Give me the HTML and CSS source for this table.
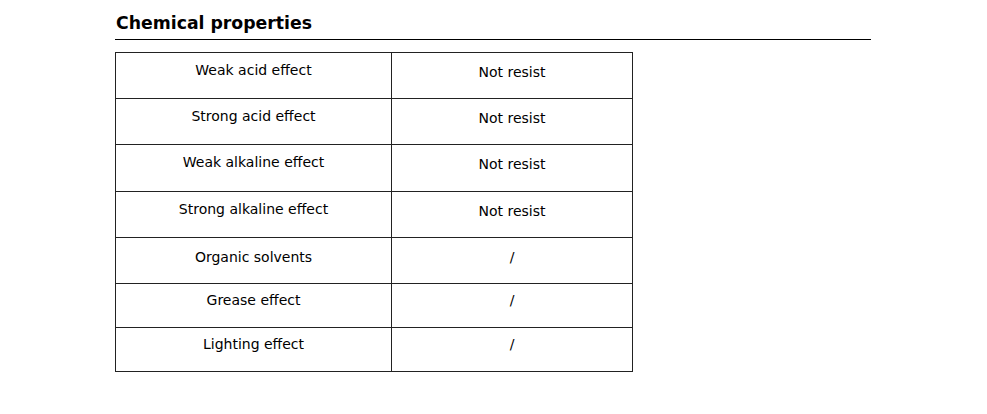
FILE: index.html
```html
<!DOCTYPE html>
<html>
<head>
<meta charset="utf-8">
<link rel="stylesheet" href="styles.css">
</head>
<body>
<div class="page">
  <h2 class="title">Chemical properties</h2>
  <table class="props">
    <tr class="r1"><td class="k">Weak acid effect</td><td class="v">Not resist</td></tr>
    <tr class="r2"><td class="k">Strong acid effect</td><td class="v">Not resist</td></tr>
    <tr class="r3"><td class="k">Weak alkaline effect</td><td class="v">Not resist</td></tr>
    <tr class="r4"><td class="k">Strong alkaline effect</td><td class="v">Not resist</td></tr>
    <tr class="r5"><td class="k">Organic solvents</td><td class="v">/</td></tr>
    <tr class="r6"><td class="k">Grease effect</td><td class="v">/</td></tr>
    <tr class="r7"><td class="k">Lighting effect</td><td class="v">/</td></tr>
  </table>
</div>
</body>
</html>
```
FILE: styles.css
```css
html, body { margin: 0; padding: 0; background: #fff; }
body { font-family: "DejaVu Sans", Verdana, sans-serif; color: #000; }
.page { padding: 11px 0 0 115px; width: 756px; }
.title {
  margin: 0;
  font-size: 17.3px;
  font-weight: bold;
  line-height: 24px;
  padding-bottom: 4px;
  border-bottom: 1px solid #000;
  padding-left: 1px;
}
.props {
  margin-top: 12px;
  border-collapse: collapse;
  width: 518px;
  font-size: 14px;
}
.props td {
  border: 1px solid #222;
  text-align: center;
  vertical-align: top;
  padding: 0;
  line-height: 16px;
  box-sizing: border-box;
}
.props td.k { width: 276px; }
.props td { height: 46px; }
.r3 td { height: 47px; }
.r6 td, .r7 td { height: 44px; }
.r1 td.k, .r2 td.k, .r3 td.k, .r4 td.k { padding-top: 9px; }
.r1 td.v, .r2 td.v, .r3 td.v, .r4 td.v { padding-top: 11px; }
.r5 td { padding-top: 11px; }
.r6 td, .r7 td { padding-top: 8px; }
```
